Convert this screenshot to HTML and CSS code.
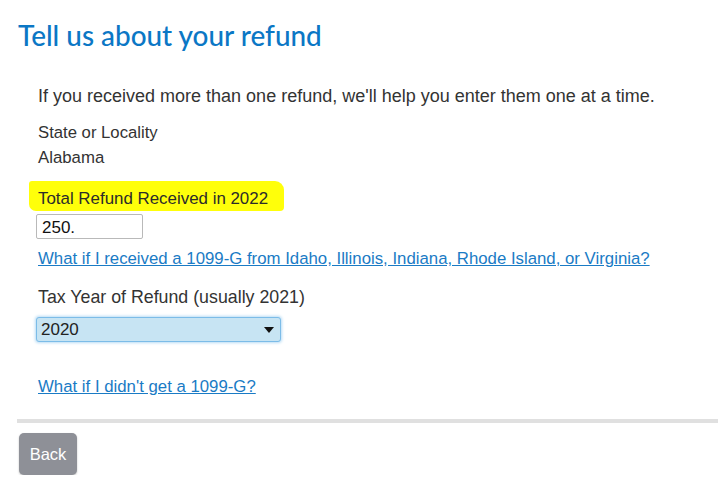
FILE: index.html
```html
<!DOCTYPE html>
<html>
<head>
<meta charset="utf-8">
<link rel="stylesheet" href="styles.css">
</head>
<body>
<div class="page">
  <h1 class="title">Tell us about your refund</h1>
  <div class="content">
    <p class="intro">If you received more than one refund, we'll help you enter them one at a time.</p>
    <div class="label label-state">State or Locality</div>
    <div class="value">Alabama</div>
    <div class="hl-row"><span class="highlight">Total Refund Received in 2022</span></div>
    <div class="input-box">250.</div>
    <a class="link link-first" href="#">What if I received a 1099-G from Idaho, Illinois, Indiana, Rhode Island, or Virginia?</a>
    <div class="label label-tax">Tax Year of Refund (usually 2021)</div>
    <div class="select">
      <span>2020</span>
      <svg class="caret" width="10" height="6" viewBox="0 0 10 6"><path d="M0 0H10L5 6Z" fill="#111"/></svg>
    </div>
    <a class="link link-second" href="#">What if I didn't get a 1099-G?</a>
  </div>
  <div class="divider"></div>
  <div class="footer">
    <button class="back">Back</button>
  </div>
</div>
</body>
</html>
```
FILE: styles.css
```css
html, body {
  margin: 0;
  padding: 0;
  background: #fff;
}
.page {
  font-family: "Liberation Sans", Arial, sans-serif;
  color: #333;
  font-size: 16px;
  padding: 0 0 0 17px;
}
.title {
  margin: 0;
  padding: 18px 0 0 1px;
  font-family: "Lato", "Open Sans", sans-serif;
  font-weight: 500;
  font-size: 27.9px;
  line-height: 34px;
  color: #0b77c5;
}
.content {
  padding: 0 0 0 21px;
}
.intro {
  margin: 0;
  padding-top: 34px;
  font-size: 18px;
  line-height: 20px;
  color: #333;
  white-space: nowrap;
}
.label {
  line-height: 20px;
}
.label-state {
  margin-top: 17px;
  font-size: 16.7px;
}
.value {
  margin-top: 5px;
  line-height: 20px;
  font-size: 16.8px;
}
.hl-row {
  display: flex;
  margin-top: 13px;
  margin-left: -9px;
}
.highlight {
  display: block;
  background: #ffff0a;
  padding: 8px 16px 2px 9px;
  line-height: 20px;
  border-radius: 3px 9px 4px 7px;
  color: #2b2b2b;
  font-size: 16.9px;
}
.input-box {
  margin-top: 3px;
  margin-left: -2px;
  width: 100px;
  height: 23px;
  border: 1px solid #b9b9b9;
  border-radius: 2px;
  padding: 0 0 0 5px;
  line-height: 25px;
  font-size: 17px;
  color: #111;
}
.link {
  display: block;
  color: #1a7bc5;
  text-decoration: underline;
  line-height: 20px;
  font-size: 16.8px;
  white-space: nowrap;
}
.link-first {
  margin-top: 10px;
}
.label-tax {
  margin-top: 18px;
  font-size: 17.8px;
}
.select {
  margin-top: 10px;
  margin-left: -2px;
  width: 245px;
  height: 25px;
  box-sizing: border-box;
  border: 1px solid #7cbce8;
  border-radius: 3px;
  background: #c7e4f3;
  box-shadow: 0 0 3px 1px #b9dcf5;
  display: flex;
  align-items: center;
  justify-content: space-between;
  padding: 0 6px 0 4px;
  color: #222;
  line-height: 20px;
  font-size: 17px;
}
.caret {
  display: block;
}
.link-second {
  margin-top: 35px;
}
.divider {
  margin-top: 22px;
  height: 4px;
  background: #e0e0e0;
  margin-right: 1px;
}
.footer {
  padding: 10px 0 0 2px;
}
.back {
  font-family: "Liberation Sans", Arial, sans-serif;
  font-size: 16.5px;
  color: #fff;
  background: #8e9097;
  border: none;
  border-radius: 5px;
  width: 58px;
  height: 42px;
  box-shadow: 0 1px 2px rgba(0,0,0,0.25);
  padding: 0;
}
```
